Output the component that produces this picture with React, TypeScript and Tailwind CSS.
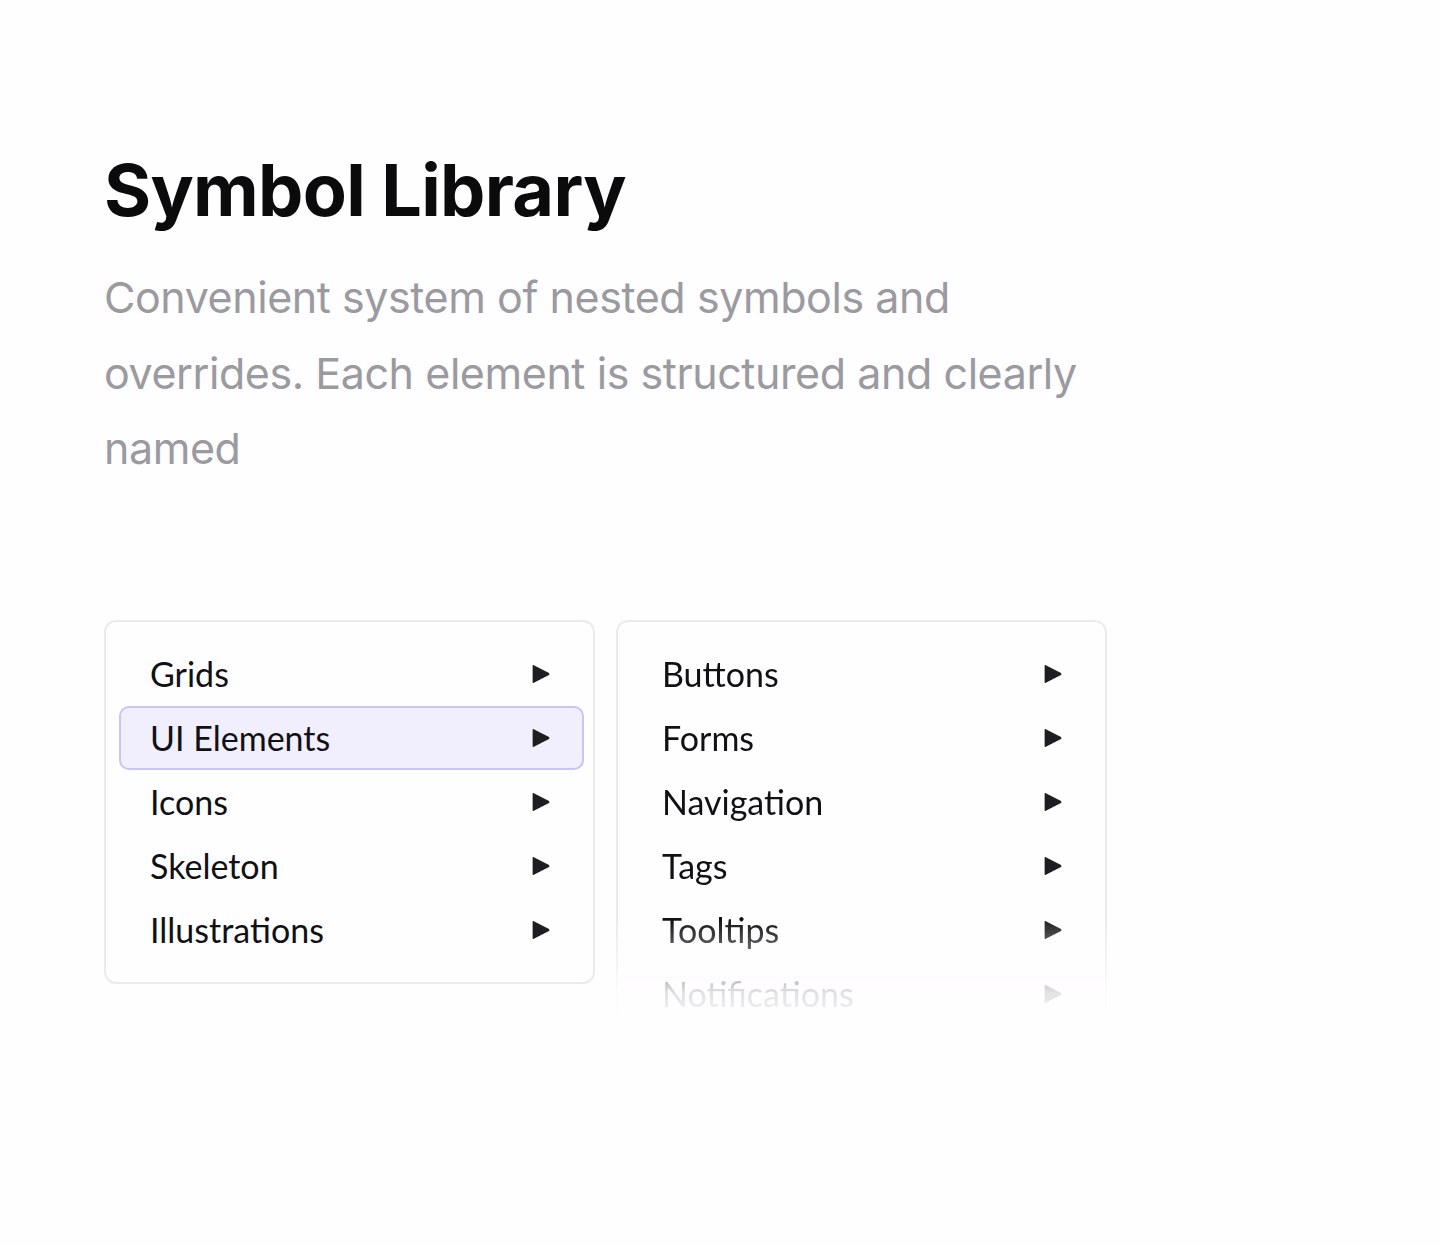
import React from "react";

const Arrow = () => (
  <svg width="18" height="20" viewBox="0 0 18 20" className="shrink-0">
    <path d="M1.8 1.2 L17 9.1 Q18 10 17 10.9 L1.8 18.8 Q0.6 19.4 0.6 18 L0.6 2 Q0.6 0.6 1.8 1.2 Z" fill="#1e1e22" />
  </svg>
);

const Row = ({ label, active = false }: { label: string; active?: boolean }) => (
  <div
    className={
      active
        ? "flex h-[64px] items-center justify-between rounded-[10px] border-2 border-[#c9c4f6] bg-[#f1effe] pl-[29px] pr-[32px]"
        : "flex h-[64px] items-center justify-between rounded-[10px] border-2 border-transparent pl-[29px] pr-[32px]"
    }
  >
    <span className="text-[34px] leading-none text-[#111113]">{label}</span>
    <Arrow />
  </div>
);

export default function App() {
  return (
    <div className="min-h-[1246px] w-full bg-[#fefdff]" style={{ fontFamily: "Inter, 'Noto Sans', sans-serif" }}>
      <div className="pl-[104px] pt-[150px]">
        <h1 className="text-[72px] font-bold leading-[80px] tracking-[-0.01em] text-[#0b0b0c]">Symbol Library</h1>
        <p className="mt-[30px] max-w-[1000px] text-[43px] leading-[75.5px] tracking-[-0.01em] text-[#9b9a9f]">
          Convenient system of nested symbols and overrides. Each element is structured and clearly named
        </p>
        <div className="mt-[133px] flex items-start gap-[21px]" style={{ fontFamily: "Lato, 'Open Sans', sans-serif" }}>
          <div className="w-[491px] rounded-[12px] border-2 border-[#ebeaee] bg-[#fefdff] py-[20px] pl-[13px] pr-[9px]">
            <Row label="Grids" />
            <Row label="UI Elements" active />
            <Row label="Icons" />
            <Row label="Skeleton" />
            <Row label="Illustrations" />
          </div>
          <div className="h-[428px] w-[491px] rounded-[12px] border-2 border-[#ebeaee] bg-[#fefdff] py-[20px] pl-[13px] pr-[9px] [mask-image:linear-gradient(to_bottom,black_70%,rgba(0,0,0,0.12)_87%,transparent_97%)]">
            <Row label="Buttons" />
            <Row label="Forms" />
            <Row label="Navigation" />
            <Row label="Tags" />
            <Row label="Tooltips" />
            <Row label="Notifications" />
          </div>
        </div>
      </div>
    </div>
  );
}
